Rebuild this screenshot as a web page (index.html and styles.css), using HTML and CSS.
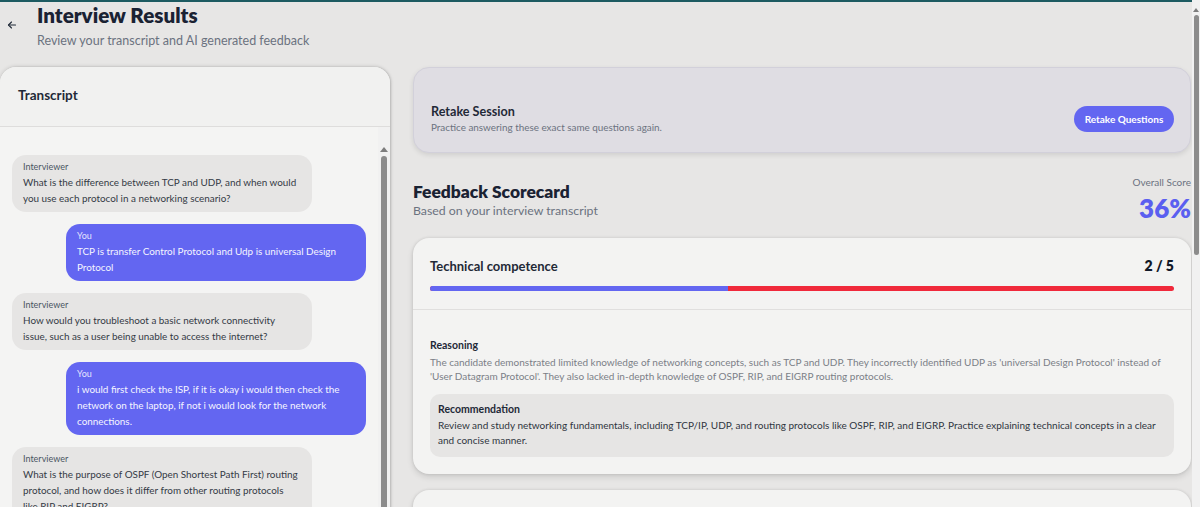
FILE: index.html
```html
<!DOCTYPE html>
<html lang="en">
<head>
<meta charset="utf-8">
<title>Interview Results</title>
<link rel="stylesheet" href="styles.css">
</head>
<body>
<div class="topline"></div>
<div class="page">
  <header class="head">
    <button class="back" aria-label="Back">
      <svg width="12" height="12" viewBox="0 0 24 24" fill="none" stroke="#1f2937" stroke-width="2.2" stroke-linecap="round" stroke-linejoin="round"><path d="M19 12H5"/><path d="M11 6l-6 6 6 6"/></svg>
    </button>
    <div class="head-text">
      <h1>Interview Results</h1>
      <p>Review your transcript and AI generated feedback</p>
    </div>
  </header>

  <main class="grid">
    <section class="transcript">
      <div class="t-head">Transcript</div>
      <div class="t-body">
        <div class="msgs">
          <div class="msg ai"><div class="who">Interviewer</div><div class="txt">What is the difference between TCP and UDP, and when would you use each protocol in a networking scenario?</div></div>
          <div class="msg me"><div class="who">You</div><div class="txt">TCP is transfer Control Protocol and Udp is universal Design Protocol</div></div>
          <div class="msg ai"><div class="who">Interviewer</div><div class="txt">How would you troubleshoot a basic network connectivity issue, such as a user being unable to access the internet?</div></div>
          <div class="msg me"><div class="who">You</div><div class="txt">i would first check the ISP, if it is okay i would then check the network on the laptop, if not i would look for the network connections.</div></div>
          <div class="msg ai"><div class="who">Interviewer</div><div class="txt">What is the purpose of OSPF (Open Shortest Path First) routing protocol, and how does it differ from other routing protocols like RIP and EIGRP?</div></div>
        </div>
        <div class="vscroll"><span class="arr"></span><span class="thumb"></span></div>
      </div>
    </section>

    <section class="results">
      <div class="retake">
        <div class="retake-text">
          <h3>Retake Session</h3>
          <p>Practice answering these exact same questions again.</p>
        </div>
        <button class="btn">Retake Questions</button>
      </div>

      <div class="fb-head">
        <div>
          <h2>Feedback Scorecard</h2>
          <p>Based on your interview transcript</p>
        </div>
        <div class="overall">
          <span class="ol">Overall Score</span>
          <span class="pct">36%</span>
        </div>
      </div>

      <div class="card">
        <div class="card-top">
          <div class="row">
            <span class="cat">Technical competence</span>
            <span class="score">2 / 5</span>
          </div>
          <div class="bar"><span class="fill" style="width:40%"></span></div>
        </div>
        <div class="card-body">
          <h4>Reasoning</h4>
          <p class="reason">The candidate demonstrated limited knowledge of networking concepts, such as TCP and UDP. They incorrectly identified UDP as 'universal Design Protocol' instead of 'User Datagram Protocol'. They also lacked in-depth knowledge of OSPF, RIP, and EIGRP routing protocols.</p>
          <div class="rec">
            <h4>Recommendation</h4>
            <p>Review and study networking fundamentals, including TCP/IP, UDP, and routing protocols like OSPF, RIP, and EIGRP. Practice explaining technical concepts in a clear and concise manner.</p>
          </div>
        </div>
      </div>
      <div class="card stub"></div>
    </section>
  </main>
</div>
<div class="pagescroll"><span class="arr"></span><span class="thumb"></span></div>
</body>
</html>
```
FILE: styles.css
```css
* { box-sizing: border-box; }
html, body { margin: 0; padding: 0; }
body {
  background: #e7e6e5;
  font-family: "Lato", "Noto Sans", sans-serif;
  color: #1f2937;
  height: 507px;
  overflow: hidden;
}
.topline { height: 2px; background: #1d5b61; }
.page { width: 1192px; }

.head { display: flex; align-items: flex-start; height: 65px; }
.back {
  border: 0; background: none; padding: 0;
  width: 37px; height: 46px;
  display: flex; align-items: center; justify-content: center;
}
.back svg { margin-left: -13px; }
.head-text h1 { margin: 1px 0 0; font-size: 20.6px; line-height: 24px; font-weight: 800; color: #1a2233; }
.head-text p { margin: 6px 0 0; font-size: 12.5px; line-height: 16px; color: #6b7280; }

.grid { display: grid; grid-template-columns: 390px 778px; column-gap: 23px; align-items: start; }

.transcript {
  background: #f4f4f3;
  border-radius: 16px 16px 0 0;
  box-shadow: 0 0 4px rgba(0,0,0,0.18), 1px 0 2px rgba(0,0,0,0.12);
  height: 460px;
  display: flex; flex-direction: column;
  overflow: hidden;
}
.t-head {
  height: 60px; flex: none;
  background: #f1f1f0;
  border-bottom: 1px solid #dedddc;
  padding: 0 18px 4px;
  display: flex; align-items: center;
  font-size: 13.5px; font-weight: 700; color: #1f2937;
}
.t-body { flex: 1; display: flex; min-height: 0; }
.msgs { flex: 1; padding: 28px 12px 0 12px; display: flex; flex-direction: column; gap: 12px; overflow: hidden; }
.msg { width: 300px; border-radius: 14px; padding: 6px 12px 6px 11px; flex: none; }
.msg .who { font-size: 9px; line-height: 12px; margin-bottom: 1px; }
.msg .txt { font-size: 9.9px; line-height: 16px; }
.msg.ai { background: #e6e5e4; color: #343a45; align-self: flex-start; }
.msg.ai .who { color: #4b5563; }
.msg.me { background: #6366f1; color: #f5f5ff; align-self: flex-end; }
.msg.me .who { color: #e3e4ff; }

.vscroll {
  width: 12px; flex: none;
  display: flex; flex-direction: column; align-items: center;
  padding-top: 20px; background: #f1f1f1;
}
.vscroll .arr {
  width: 0; height: 0;
  border-left: 4px solid transparent; border-right: 4px solid transparent;
  border-bottom: 5px solid #7d7d7d;
}
.vscroll .thumb { width: 6px; flex: 1; margin-top: 4px; background: #8c8c8c; border-radius: 3px 3px 0 0; }

.results { display: flex; flex-direction: column; }
.retake {
  height: 86px;
  background: #dfdde3;
  border: 1px solid #d2d0da;
  border-radius: 16px;
  box-shadow: 0 2px 5px rgba(0,0,0,0.10);
  display: flex; align-items: center; justify-content: space-between;
  padding: 35px 16px 18px 17px;
}
.retake h3 { margin: 0; font-size: 12.6px; line-height: 17px; font-weight: 700; color: #1f2937; }
.retake p { margin: 1px 0 0; font-size: 9.9px; line-height: 13px; color: #6b7280; }
.btn {
  border: 0; background: #6366f1; color: #fff;
  font-family: "Lato", sans-serif; font-weight: 700; font-size: 10px;
  height: 26px; width: 100px; padding: 0; border-radius: 13px;
}

.fb-head { display: flex; justify-content: space-between; align-items: flex-start; margin-top: 24px; }
.fb-head h2 { margin: 4px 0 0; font-size: 17.4px; line-height: 22px; font-weight: 800; color: #1a2233; }
.fb-head p { margin: 0; font-size: 12.3px; line-height: 16px; color: #6b7280; }
.overall { display: flex; flex-direction: column; align-items: flex-end; margin-top: -2px; }
.overall .ol { font-size: 10px; line-height: 14px; color: #6b7280; }
.overall .pct { font-size: 26px; line-height: 28px; font-weight: 800; color: #5b5ff0; margin-top: 5px; }

.card {
  margin-top: 16px;
  background: #f3f3f2;
  border-radius: 16px;
  box-shadow: 0 0 3px rgba(0,0,0,0.12), 0 3px 6px rgba(0,0,0,0.12);
}
.card-top { padding: 19px 17px 18px; border-bottom: 1px solid #e0dfde; }
.row { display: flex; justify-content: space-between; align-items: center; }
.cat { font-size: 13px; line-height: 18px; font-weight: 700; color: #1f2937; }
.score { font-size: 14px; line-height: 18px; font-weight: 800; color: #111827; }
.bar { margin-top: 11px; height: 5px; border-radius: 3px; background: #f0293b; overflow: hidden; }
.bar .fill { display: block; height: 100%; background: #6366f1; }

.card-body { padding: 28px 17px 17px; }
.card-body h4 { margin: 0; font-size: 10.5px; line-height: 14px; font-weight: 700; color: #1f2937; }
.reason { margin: 3px 0 0; font-size: 10px; line-height: 14px; color: #7b7f87; }
.rec { margin-top: 11px; background: #e6e5e4; border-radius: 10px; padding: 8px 8px 9px; }
.rec p { margin: 2px 0 0; font-size: 10px; line-height: 15px; color: #2f3540; }

.card.stub { height: 60px; }

.pagescroll {
  position: fixed; top: 0; right: 0; width: 8px; height: 507px;
  background: #f1f1f1;
  display: flex; flex-direction: column; align-items: center;
  padding-top: 8px;
}
.pagescroll .arr {
  width: 0; height: 0;
  border-left: 3px solid transparent; border-right: 3px solid transparent;
  border-bottom: 4px solid #7d7d7d;
}
.pagescroll .thumb { width: 5px; height: 240px; margin-top: 3px; background: #8c8c8c; border-radius: 3px; }
```
